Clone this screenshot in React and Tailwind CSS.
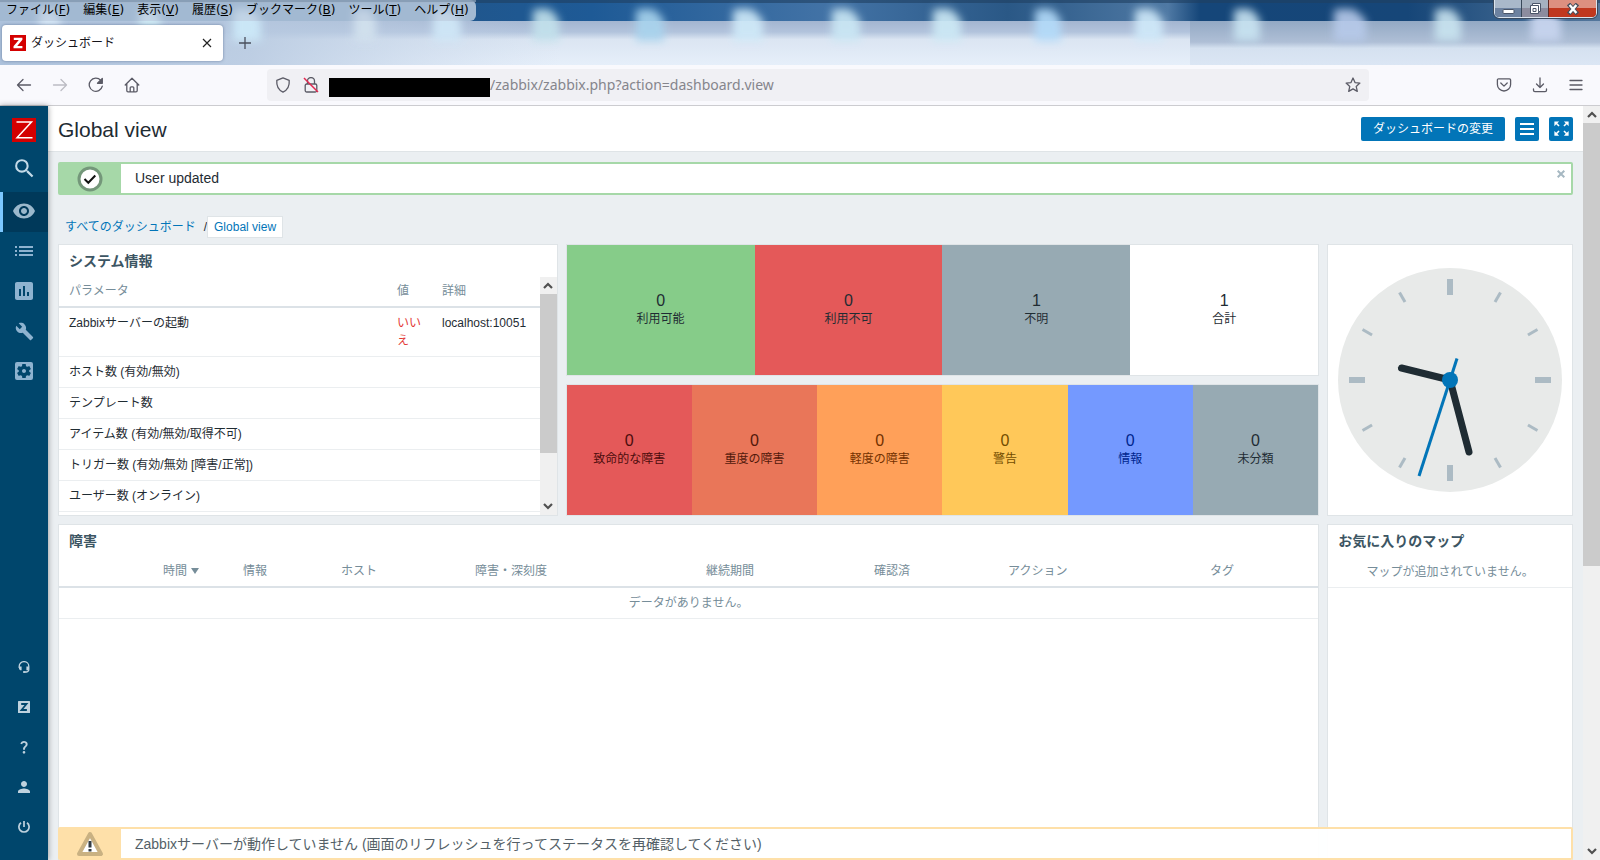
import React from "react";
import {
  MdSearch,
  MdVisibility,
  MdList,
  MdAssessment,
  MdBuild,
  MdSettingsApplications,
  MdQuestionMark,
  MdPerson,
  MdZoomOutMap,
} from "react-icons/md";

/* ---------- Browser window ---------- */

const MENUS = [
  ["ファイル", "F"],
  ["編集", "E"],
  ["表示", "V"],
  ["履歴", "S"],
  ["ブックマーク", "B"],
  ["ツール", "T"],
  ["ヘルプ", "H"],
];

const GLOWS = [
  [50, 22, "#d5e6f5"], [150, 22, "#cfeaf4"], [247, 28, "#cdeaf9"], [365, 22, "#d3e2ee"], [447, 28, "#d0e8f8"],
  [546, 26, "#c3e2ec"], [650, 28, "#a9d4ee"], [748, 30, "#d0ebf9"], [846, 28, "#cbe8f5"], [947, 28, "#cdeaf6"],
  [1048, 26, "#b4dcfa"], [1149, 28, "#d0eafa"], [1247, 26, "#c9e4f2"], [1350, 32, "#b7caea"], [1448, 26, "#c9e4f0"],
  [1546, 30, "#c9d6f0"],
];

function GlassBackdrop() {
  return (
    <svg className="absolute inset-0 h-full w-full" viewBox="0 0 1600 65" preserveAspectRatio="none" aria-hidden="true">
      <defs>
        <filter id="soft" x="-50%" y="-50%" width="200%" height="200%"><feGaussianBlur stdDeviation="4" /></filter>
        <linearGradient id="sky" x1="0" x2="1" y1="0" y2="0">
          <stop offset="0.28" stopColor="#20568c" />
          <stop offset="0.37" stopColor="#1e5a96" />
          <stop offset="0.52" stopColor="#4373a6" />
          <stop offset="0.63" stopColor="#2a5886" />
          <stop offset="0.73" stopColor="#4f79a4" />
          <stop offset="0.75" stopColor="#154679" />
          <stop offset="0.88" stopColor="#164678" />
          <stop offset="1" stopColor="#54779c" />
        </linearGradient>
        <linearGradient id="frost" x1="0" x2="0" y1="0" y2="1">
          <stop offset="0" stopColor="#a3b5d0" />
          <stop offset="0.25" stopColor="#b2c3dc" />
          <stop offset="0.42" stopColor="#dbe5f2" />
          <stop offset="1" stopColor="#e6effa" />
        </linearGradient>
        <linearGradient id="frostRight" x1="0" x2="0" y1="0" y2="1">
          <stop offset="0" stopColor="#93a9c4" />
          <stop offset="0.48" stopColor="#afbfd6" />
          <stop offset="0.62" stopColor="#d5e1f0" />
          <stop offset="1" stopColor="#dbe6f4" />
        </linearGradient>
        <linearGradient id="frostLeft" x1="0" x2="1" y1="0" y2="0">
          <stop offset="0" stopColor="#adc2dc" />
          <stop offset="0.45" stopColor="#b7c9e0" stopOpacity="0.85" />
          <stop offset="1" stopColor="#c5d6ea" stopOpacity="0" />
        </linearGradient>
      </defs>
      <rect width="1600" height="21" fill="url(#sky)" />
      <rect width="1600" height="3" fill="#1f3f60" opacity="0.6" />
      <rect y="21" width="1600" height="44" fill="url(#frost)" />
      <rect y="21" width="560" height="44" fill="url(#frostLeft)" />
      <rect x="1190" y="21" width="410" height="44" fill="url(#frostRight)" />
      {GLOWS.map(([x, w, color]) => (
        <path key={x} d={`M${x - w / 2} 12q0 -3 4 -3h${w / 2 - 2}q6 2 ${w / 2 - 2} 12v20h-${w}z`} fill={color} filter="url(#soft)" opacity="0.9" />
      ))}
      <path d="M0 0h470a6 6 0 0 1 6 6v9a6 6 0 0 1-6 6H0z" fill="#c3d2e3" opacity="0.8" />
      <rect width="476" height="2" fill="#8298b0" opacity="0.8" />
    </svg>
  );
}

function WindowControls() {
  return (
    <div className="flex h-[18px] overflow-hidden rounded-b-[5px] border border-t-0 border-[#dbe4ee] outline outline-[#3a4a5e]">
      <button aria-label="最小化" className="flex w-[27px] items-center justify-center border-r border-[#38485a] bg-linear-to-b from-[#a9b8ca] from-50% to-[#6d82a0] to-50%">
        <svg width="13" height="16" viewBox="0 0 13 16"><rect x="1" y="8.500" width="11" height="4" rx="1" fill="#fff" stroke="#4a5568" /></svg>
      </button>
      <button aria-label="元に戻す" className="flex w-[27px] items-center justify-center border-r border-[#5d2a26] bg-linear-to-b from-[#a5b1c0] from-50% to-[#8c8c9e] to-50%">
        <svg width="14" height="16" viewBox="0 0 14 16">
          <path d="M4.500 2.500h8v8h-2v2h-8v-8h2z" fill="#fff" stroke="#4a5568" />
          <path d="M4.500 4.500h6v6M5 7.500h3v3H5z" fill="none" stroke="#4a5568" />
        </svg>
      </button>
      <button aria-label="閉じる" className="flex w-[47px] items-center justify-center bg-linear-to-b from-[#dd9080] from-50% to-[#c0381f] to-50%">
        <svg width="12" height="12" viewBox="0 0 14 14">
          <path d="M3.500 3l7 8M10.500 3l-7 8" stroke="#48505e" strokeWidth="5" strokeLinecap="square" />
          <path d="M4 3.500l6 7M10 3.500l-6 7" stroke="#fff" strokeWidth="2.800" strokeLinecap="square" />
        </svg>
      </button>
    </div>
  );
}

function Stroke({ children, size = 16, className = "" }) {
  return (
    <svg width={size} height={size} viewBox="0 0 16 16" fill="none" stroke="currentColor" strokeWidth="1.300" strokeLinecap="round" strokeLinejoin="round" className={className} aria-hidden="true">
      {children}
    </svg>
  );
}

function BrowserChrome() {
  return (
    <header className="shrink-0 border-b border-[#ccccd0]">
      <div className="relative h-[65px]">
        <GlassBackdrop />
        <div className="relative flex h-[21px] items-start justify-between pr-[3px]">
          <nav className="flex gap-[13px] pl-[6px] font-['DejaVu_Sans','Noto_Sans_CJK_JP',sans-serif] text-[12px] leading-5 text-black">
            {MENUS.map(([label, key]) => (
              <button key={key} className="whitespace-nowrap">
                {label}(<u>{key}</u>)
              </button>
            ))}
          </nav>
          <WindowControls />
        </div>
        <div className="relative flex items-center gap-4 pt-1 pl-[2px]">
          <div className="flex h-9 w-[221px] items-center gap-[5px] rounded bg-white pr-[10px] pl-2 shadow-[0_0_3px_rgba(60,80,120,0.6)]">
            <svg width="16" height="16" viewBox="0 0 16 16" aria-hidden="true">
              <rect width="16" height="16" fill="#d40000" />
              <path d="M3.800 2.700h8.600v2L7.200 11.100h5.200v2.200H3.500v-2L8.800 4.900H3.800z" fill="#fff" />
            </svg>
            <span className="flex-1 text-[12px] text-[#15141a]">ダッシュボード</span>
            <button aria-label="タブを閉じる" className="text-[#222]">
              <svg width="12" height="12" viewBox="0 0 12 12" stroke="currentColor" strokeWidth="1.200"><path d="M2 2l8 8M10 2l-8 8" /></svg>
            </button>
          </div>
          <button aria-label="新しいタブ" className="text-[#4a4f5c]">
            <svg width="12" height="12" viewBox="0 0 12 12" stroke="currentColor" strokeWidth="1.300"><path d="M6 0v12M0 6h12" /></svg>
          </button>
        </div>
      </div>

      <div className="flex h-10 items-center bg-[#f9f9fd] pr-4 pl-4 text-[#5b5b66]">
        <div className="flex w-[251px] items-center gap-5">
          <button aria-label="戻る"><Stroke><path d="M14.500 8h-13M7 2.500L1.500 8 7 13.500" /></Stroke></button>
          <button aria-label="進む" className="text-[#bcbcc4]"><Stroke><path d="M1.500 8h13M9 2.500L14.500 8 9 13.500" /></Stroke></button>
          <button aria-label="再読み込み">
            <Stroke><path d="M14.300 9.200A6.600 6.600 0 1 1 12.800 3.400" /><path d="M14.300 1.500v4.800H9.500z" fill="currentColor" /></Stroke>
          </button>
          <button aria-label="ホーム">
            <Stroke><path d="M1.200 8L8 1.200 14.800 8M2.800 6.600v7c0 .7.500 1.200 1.200 1.200h8c.7 0 1.200-.5 1.200-1.200v-7M6.200 14.600v-3.800c0-.6.400-1 1-1h1.600c.6 0 1 .4 1 1v3.800" /></Stroke>
          </button>
        </div>
        <form className="flex h-8 flex-1 items-center rounded bg-[#f0f0f4] pr-2 pl-2">
          <Stroke><path d="M8 .9l6.200 2.500c.4 4.500-1.400 9.500-6.200 11.700C3.200 12.900 1.400 7.900 1.800 3.400z" /></Stroke>
          <svg width="16" height="16" viewBox="0 0 16 16" fill="none" stroke="currentColor" strokeWidth="1.300" className="ml-3" aria-hidden="true">
            <path d="M4.500 7V4a3.500 3.500 0 0 1 7 0v3" />
            <rect x="2.200" y="7" width="11.600" height="8" rx="1.500" />
            <path d="M1 1l14 14" stroke="#e22850" strokeWidth="1.500" />
          </svg>
          <span className="ml-[10px] mt-1 h-[19px] w-[161px] bg-black" />
          <input
            aria-label="アドレス"
            defaultValue="/zabbix/zabbix.php?action=dashboard.view"
            className="min-w-0 flex-1 bg-transparent font-['Noto_Sans',sans-serif] text-[14px] text-[#85858c] outline-none"
          />
          <button type="button" aria-label="ブックマークに追加">
            <Stroke><path d="M8 1l2 4.600 4.900.5-3.700 3.300 1.100 5L8 11.900l-4.300 2.500 1.100-5L1.100 6.100 6 5.600z" /></Stroke>
          </button>
        </form>
        <div className="flex items-center gap-5 pl-[127px]">
          <button aria-label="Pocket"><Stroke><path d="M2.500 1.800h11c.6 0 1.100.5 1.100 1.100v4.500a6.600 6.600 0 0 1-13.200 0V2.900c0-.6.500-1.100 1.100-1.100zM4.800 6L8 9.100 11.200 6" /></Stroke></button>
          <button aria-label="ダウンロード"><Stroke><path d="M8 1v9.500M4.500 7L8 10.500 11.500 7M1.500 12v1.300c0 .8.600 1.400 1.400 1.400h10.200c.8 0 1.400-.6 1.400-1.400V12" /></Stroke></button>
          <button aria-label="メニュー"><Stroke><path d="M2 3.500h12M2 8h12M2 12.500h12" /></Stroke></button>
        </div>
      </div>
    </header>
  );
}

function ScrollBar({ thumb, label }) {
  return (
    <div className="flex w-[17px] shrink-0 flex-col bg-[#f0f0f0]" aria-label={label}>
      <button aria-label="上へ" className="flex h-[17px] items-center justify-center text-[#505050]">
        <svg width="10" height="7" viewBox="0 0 10 7" fill="none" stroke="currentColor" strokeWidth="2.200"><path d="M1 6l4-4 4 4" /></svg>
      </button>
      <div className="min-h-0 flex-1"><div className={`bg-[#cbcbcb] ${thumb}`} /></div>
      <button aria-label="下へ" className="flex h-[17px] items-center justify-center text-[#505050]">
        <svg width="10" height="7" viewBox="0 0 10 7" fill="none" stroke="currentColor" strokeWidth="2.200"><path d="M1 1l4 4 4-4" /></svg>
      </button>
    </div>
  );
}

/* ---------- Sidebar ---------- */

const MAIN_NAV = [
  { label: "監視データ", Icon: MdVisibility, size: 24, active: true },
  { label: "インベントリ", Icon: MdList, size: 24 },
  { label: "レポート", Icon: MdAssessment, size: 24 },
  { label: "設定", Icon: MdBuild, size: 19 },
  { label: "管理", Icon: MdSettingsApplications, size: 24 },
];

function ZBadge() {
  return (
    <svg width="12" height="12" viewBox="0 0 12 12" aria-hidden="true">
      <rect width="12" height="12" rx="0.500" fill="#bfd2de" />
      <path d="M3.200 3h5.300L3.500 9h5.400" fill="none" stroke="#00466c" strokeWidth="1.800" />
    </svg>
  );
}

function Headset() {
  return (
    <svg width="12" height="12" viewBox="0 0 12 12" fill="none" stroke="currentColor" aria-hidden="true">
      <path d="M1.200 7V5.200a4.800 4.600 0 0 1 9.600 0V8.500q0 2-2.300 2.500H6" strokeWidth="1.300" />
      <path d="M1 5.500h2.600v3.800H2.200L1 8zM8.400 5.500H11V8L9.800 9.300H8.400z" fill="currentColor" stroke="none" />
      <path d="M5 11h2.500" strokeWidth="1.600" />
    </svg>
  );
}

function Power() {
  return (
    <svg width="12" height="12" viewBox="0 0 12 12" fill="none" stroke="currentColor" strokeWidth="1.700" aria-hidden="true">
      <path d="M6 0v6M3 1.800a5.100 5.100 0 1 0 6 0" />
    </svg>
  );
}

const USER_NAV = [
  { label: "サポート", icon: <Headset /> },
  { label: "Share", icon: <ZBadge /> },
  { label: "ヘルプ", icon: <MdQuestionMark size={16} /> },
  { label: "ユーザー設定", icon: <MdPerson size={18} /> },
  { label: "サインアウト", icon: <Power /> },
];

function Sidebar() {
  return (
    <aside className="z-10 flex w-12 shrink-0 flex-col justify-between bg-[#00466c] pb-3 shadow-[0_0_6px_rgba(0,0,0,0.4)]">
      <div>
        <a href="#home" aria-label="Zabbix" className="flex justify-center pt-3">
          <svg width="24" height="24" viewBox="0 0 24 24">
            <rect width="24" height="24" fill="#d40000" />
            <path d="M4.500 4h15L5 19.800h15.500" fill="none" stroke="#fff" strokeWidth="1.500" />
          </svg>
        </a>
        <button aria-label="検索" className="mb-[10px] flex h-10 w-full items-center justify-center pt-3 text-[#c3dae8]">
          <MdSearch size={25} />
        </button>
        <nav>
          {MAIN_NAV.map(({ label, Icon, size, active }) => (
            <a
              key={label}
              href="#nav"
              aria-label={label}
              className={
                active
                  ? "flex h-10 items-center justify-center border-l-[3px] border-[#7cc7ff] bg-[#00395a] pr-[3px] pb-[2px] text-[#9bb8cc]"
                  : "flex h-10 items-center justify-center pb-[2px] text-[#8eb3d0]"
              }
            >
              <Icon size={size} />
            </a>
          ))}
        </nav>
      </div>
      <nav>
        {USER_NAV.map(({ label, icon }) => (
          <a key={label} href="#user" aria-label={label} className="flex h-10 items-center justify-center pb-[2px] text-[#bfd2de]">
            {icon}
          </a>
        ))}
      </nav>
    </aside>
  );
}

/* ---------- Dashboard ---------- */

const TH = "border-b-2 border-[#dce2e7] px-[5px] pt-[5px] pb-[6px] text-left font-normal text-[#768d99]";
const TD = "border-b border-[#ebeef0] px-[5px] py-[6px] align-top";

function Widget({ title, className, children }) {
  return (
    <section className={`flex min-h-0 flex-col border border-[#dfe4e7] bg-white ${className}`}>
      {title && <h4 className="h-8 shrink-0 px-[10px] text-[14px] leading-8 font-bold text-[#3c5563]">{title}</h4>}
      {children}
    </section>
  );
}

const SYSTEM_ROWS = [
  "ホスト数 (有効/無効)",
  "テンプレート数",
  "アイテム数 (有効/無効/取得不可)",
  "トリガー数 (有効/無効 [障害/正常])",
  "ユーザー数 (オンライン)",
];

function SystemInfo() {
  return (
    <Widget title="システム情報" className="col-span-4 row-span-2">
      <div className="flex min-h-0 flex-1 overflow-hidden">
        <div className="flex-1 overflow-hidden">
          <table className="w-full table-fixed border-separate border-spacing-0">
            <colgroup>
              <col className="w-[333px]" />
              <col className="w-[45px]" />
              <col className="w-[103px]" />
            </colgroup>
            <thead>
              <tr>
                <th className={`${TH} pl-[10px]`}>パラメータ</th>
                <th className={TH}>値</th>
                <th className={TH}>詳細</th>
              </tr>
            </thead>
            <tbody>
              <tr>
                <td className={`${TD} pl-[10px]`}>Zabbixサーバーの起動</td>
                <td className={`${TD} text-[#e33734]`}>いいえ</td>
                <td className={TD}>localhost:10051</td>
              </tr>
              {SYSTEM_ROWS.map((row) => (
                <tr key={row}>
                  <td className={`${TD} pl-[10px]`}>{row}</td>
                  <td className={TD} />
                  <td className={TD} />
                </tr>
              ))}
            </tbody>
          </table>
        </div>
        <ScrollBar label="システム情報のスクロール" thumb="h-[78%]" />
      </div>
    </Widget>
  );
}

const HOST_TILES = [
  ["0", "利用可能", "bg-[#86cc89] text-[#1f2c33]"],
  ["0", "利用不可", "bg-[#e45959] text-[#1f2c33]"],
  ["1", "不明", "bg-[#97aab3] text-[#1f2c33]"],
  ["1", "合計", "bg-white text-[#1f2c33]"],
];

const SEVERITY_TILES = [
  ["0", "致命的な障害", "bg-[#e45959] text-[#4b0c0c]"],
  ["0", "重度の障害", "bg-[#e97659] text-[#52190b]"],
  ["0", "軽度の障害", "bg-[#ffa059] text-[#733100]"],
  ["0", "警告", "bg-[#ffc859] text-[#734d00]"],
  ["0", "情報", "bg-[#7499ff] text-[#00268e]"],
  ["0", "未分類", "bg-[#97aab3] text-[#1f2c33]"],
];

function Tiles({ items }) {
  return (
    <Widget className="col-span-6">
      <div className="flex flex-1">
        {items.map(([count, label, tone]) => (
          <div key={label} className={`flex flex-1 flex-col items-center justify-center ${tone}`}>
            <span className="text-[16px] leading-[18px]">{count}</span>
            <span>{label}</span>
          </div>
        ))}
      </div>
    </Widget>
  );
}

function Clock() {
  const ticks = Array.from({ length: 12 }, (_, i) => i);
  return (
    <Widget className="col-span-2 row-span-2 items-center justify-center">
      <svg width="224" height="224" viewBox="-112 -112 224 224" role="img" aria-label="時計">
        <circle r="112" fill="#e8eae9" />
        {ticks.map((i) =>
          i % 3 === 0 ? (
            <rect key={i} x="-3" y="-101" width="6" height="16" fill="#acbbc4" transform={`rotate(${i * 30})`} />
          ) : (
            <rect key={i} x="-1.500" y="-101" width="3" height="11" fill="#acbbc4" transform={`rotate(${i * 30})`} />
          )
        )}
        <path d="M0 0L-48.500 -12" stroke="#1f2c33" strokeWidth="7" strokeLinecap="round" />
        <path d="M0 0L19 72" stroke="#1f2c33" strokeWidth="7" strokeLinecap="round" />
        <path d="M7 -21.500L-31 96" stroke="#0275b8" strokeWidth="3" />
        <circle r="8" fill="#0275b8" />
      </svg>
    </Widget>
  );
}

function Problems() {
  return (
    <Widget title="障害" className="col-span-10 border-b-0">
      <table className="w-full table-fixed border-separate border-spacing-0">
        <colgroup>
          <col className="w-[99px]" />
          <col className="w-[80px]" />
          <col className="w-[98px]" />
          <col className="w-[134px]" />
          <col className="w-[231px]" />
          <col className="w-[168px]" />
          <col className="w-[134px]" />
          <col className="w-[202px]" />
          <col className="w-[113px]" />
        </colgroup>
        <thead>
          <tr>
            <td className={TH} />
            <th className={TH}>
              <a href="#sort" className="flex items-center gap-1">
                時間
                <svg width="8" height="6" viewBox="0 0 8 6" aria-hidden="true"><path d="M0 0h8L4 6z" fill="currentColor" /></svg>
              </a>
            </th>
            <th className={TH}>情報</th>
            <th className={TH}>ホスト</th>
            <th className={TH}>障害・深刻度</th>
            <th className={TH}>継続期間</th>
            <th className={TH}>確認済</th>
            <th className={TH}>アクション</th>
            <th className={TH}>タグ</th>
          </tr>
        </thead>
        <tbody>
          <tr>
            <td colSpan={9} className={`${TD} text-center text-[#768d99]`}>データがありません。</td>
          </tr>
        </tbody>
      </table>
    </Widget>
  );
}

function PageHeader() {
  return (
    <div className="flex h-[46px] shrink-0 items-center justify-between border-b border-[#dfe4e7] bg-white px-[10px]">
      <h1 className="pt-[2px] text-[21px] leading-6 text-[#1f2c33]">Global view</h1>
      <div className="flex gap-[10px]">
        <button className="h-6 rounded-[2px] bg-[#0275b8] px-3 text-white">ダッシュボードの変更</button>
        <button aria-label="アクション" className="flex h-6 w-6 items-center justify-center rounded-[2px] bg-[#0275b8] text-white">
          <svg width="14" height="12" viewBox="0 0 14 12" fill="currentColor"><path d="M0 0h14v2H0zM0 5h14v2H0zM0 10h14v2H0z" /></svg>
        </button>
        <button aria-label="全画面表示" className="flex h-6 w-6 items-center justify-center rounded-[2px] bg-[#0275b8] text-white">
          <MdZoomOutMap size={19} />
        </button>
      </div>
    </div>
  );
}

export default function App() {
  return (
    <div className="flex h-screen flex-col overflow-hidden font-['Liberation_Sans','Noto_Sans_CJK_JP',sans-serif] text-[12px] leading-[18px] text-[#1f2c33]">
      <BrowserChrome />
      <div className="flex min-h-0 flex-1">
        <Sidebar />
        <main className="relative flex min-w-0 flex-1 flex-col overflow-hidden bg-[#ebeff2]">
          <PageHeader />
          <div className="flex min-h-0 flex-1 flex-col px-[10px] pt-[10px]">
            <output className="flex h-[33px] shrink-0 rounded-[2px] border-2 border-[#a6d8a8] bg-white">
              <span className="flex w-[61px] items-center justify-center bg-[#a6d8a8] pr-[2px]">
                <svg width="26" height="26" viewBox="0 0 26 26" aria-hidden="true">
                  <circle cx="13" cy="13" r="11" fill="#fff" stroke="#74977a" strokeWidth="3" />
                  <path d="M7.500 13l3.800 3.800 7-7.300" fill="none" stroke="#111" strokeWidth="2" />
                </svg>
              </span>
              <span className="flex-1 pl-[14px] text-[14px] leading-[29px]">User updated</span>
              <button aria-label="閉じる" className="mt-[6px] mr-[6px] h-2 text-[#a6b8c2]">
                <svg width="8" height="8" viewBox="0 0 8 8" stroke="currentColor" strokeWidth="2"><path d="M0.700 0.700l6.600 6.600M7.300 0.700L0.700 7.300" /></svg>
              </button>
            </output>

            <nav className="mt-[21px] mb-[6px] flex shrink-0 items-center gap-1 pl-[7px]">
              <a href="#dashboards" className="text-[#0275b8]">すべてのダッシュボード</a>
              <span className="pl-1">/</span>
              <a href="#global" className="-ml-1 border border-[#dfe4e7] bg-white px-[6px] leading-5 text-[#0275b8]">Global view</a>
            </nav>

            <div className="grid min-h-0 flex-1 grid-cols-12 grid-rows-[132px_132px_minmax(0,1fr)] gap-2">
              <SystemInfo />
              <Tiles items={HOST_TILES} />
              <Clock />
              <Tiles items={SEVERITY_TILES} />
              <Problems />
              <Widget title="お気に入りのマップ" className="col-span-2 border-b-0">
                <p className="border-b border-[#ebeef0] py-[6px] text-center text-[#768d99]">マップが追加されていません。</p>
              </Widget>
            </div>
          </div>

          <output className="absolute inset-x-[10px] bottom-0 flex h-[33px] rounded-[2px] border-2 border-[#fee0a9] bg-white/95">
            <span className="flex w-[61px] items-center justify-center bg-[#fee0a9] pr-[2px]">
              <svg width="28" height="26" viewBox="0 0 28 26" aria-hidden="true">
                <path d="M14 3L25 23H3z" fill="#fff" stroke="#c9b182" strokeWidth="4" strokeLinejoin="round" />
                <path d="M12.500 10h3v6.500h-3zM12.500 18h3v2.500h-3z" fill="#333c44" />
              </svg>
            </span>
            <span className="flex-1 pl-[14px] text-[14px] leading-[31px] text-[#545f67]">
              Zabbixサーバーが動作していません (画面のリフレッシュを行ってステータスを再確認してください)
            </span>
          </output>
        </main>
        <ScrollBar label="ページのスクロール" thumb="h-[61.5%]" />
      </div>
    </div>
  );
}
